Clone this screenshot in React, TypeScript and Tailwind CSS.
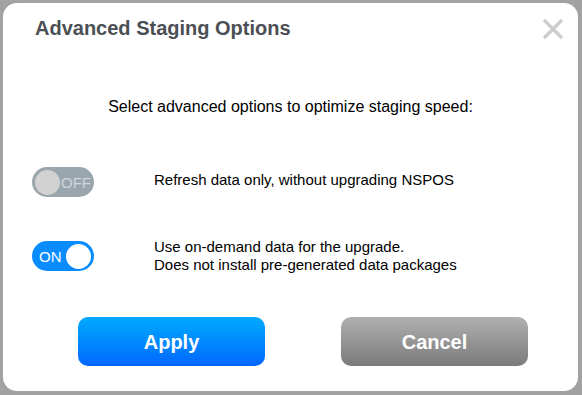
import React, { useState } from 'react';

const Toggle: React.FC<{ on: boolean; onClick: () => void }> = ({ on, onClick }) => {
  if (on) {
    return (
      <button
        onClick={onClick}
        className="flex h-[30px] w-[62px] shrink-0 items-center justify-between rounded-full bg-[#0a8cff] pl-[7px] pr-[3px]"
      >
        <span className="text-[15px] leading-none text-white">ON</span>
        <span className="h-[25px] w-[25px] rounded-full bg-white" />
      </button>
    );
  }
  return (
    <button
      onClick={onClick}
      className="flex h-[30px] w-[62px] shrink-0 items-center justify-between rounded-full bg-[#9aa6ad] pl-[3px] pr-[3px]"
    >
      <span className="h-[25px] w-[25px] rounded-full bg-[#d2d2d2]" />
      <span className="text-[15px] leading-none text-[#d0d6d9]">OFF</span>
    </button>
  );
};

export default function App() {
  const [refresh, setRefresh] = useState(false);
  const [onDemand, setOnDemand] = useState(true);

  return (
    <div
      className="h-[395px] w-[582px] bg-[#a2a2a2] p-[3px] pr-[4px]"
      style={{ fontFamily: '"Liberation Sans", Arial, sans-serif' }}
    >
      <div className="flex h-[388px] flex-col rounded-[14px] bg-white">
        {/* Header */}
        <div className="flex h-[23px] items-start justify-between pl-[32px] pr-[14px] mt-[14px]">
          <h1 className="text-[20px] font-bold leading-[23px] text-[#4b4f54]">Advanced Staging Options</h1>
          <button className="mt-[1px] text-[#cccccc]" aria-label="Close">
            <svg width="22" height="22" viewBox="0 0 22 22">
              <path d="M2 2 L20 20 M20 2 L2 20" stroke="currentColor" strokeWidth="3.2" strokeLinecap="butt" />
            </svg>
          </button>
        </div>

        <p className="mt-[58px] text-center text-[16px] leading-[18px] text-black">
          Select advanced options to optimize staging speed:
        </p>

        {/* Options */}
        <div className="mt-[51px] flex flex-col gap-[41px] pl-[29px]">
          <div className="flex items-center">
            <Toggle on={refresh} onClick={() => setRefresh(!refresh)} />
            <span className="mb-[5px] ml-[60px] text-[15px] leading-[18px] text-black">
              Refresh data only, without upgrading NSPOS
            </span>
          </div>
          <div className="flex items-center">
            <Toggle on={onDemand} onClick={() => setOnDemand(!onDemand)} />
            <span className="ml-[60px] text-[15px] leading-[18px] text-black">
              Use on-demand data for the upgrade.
              <br />
              Does not install pre-generated data packages
            </span>
          </div>
        </div>

        {/* Actions */}
        <div className="mt-[43px] flex gap-[76px] pl-[75px]">
          <button className="h-[49px] w-[187px] rounded-[10px] bg-gradient-to-b from-[#00aaff] to-[#0066ff] text-[20px] font-bold text-white">
            Apply
          </button>
          <button className="h-[49px] w-[187px] rounded-[10px] bg-gradient-to-b from-[#b0b0b0] to-[#7b7b7b] text-[20px] font-bold text-white">
            Cancel
          </button>
        </div>
      </div>
    </div>
  );
}
